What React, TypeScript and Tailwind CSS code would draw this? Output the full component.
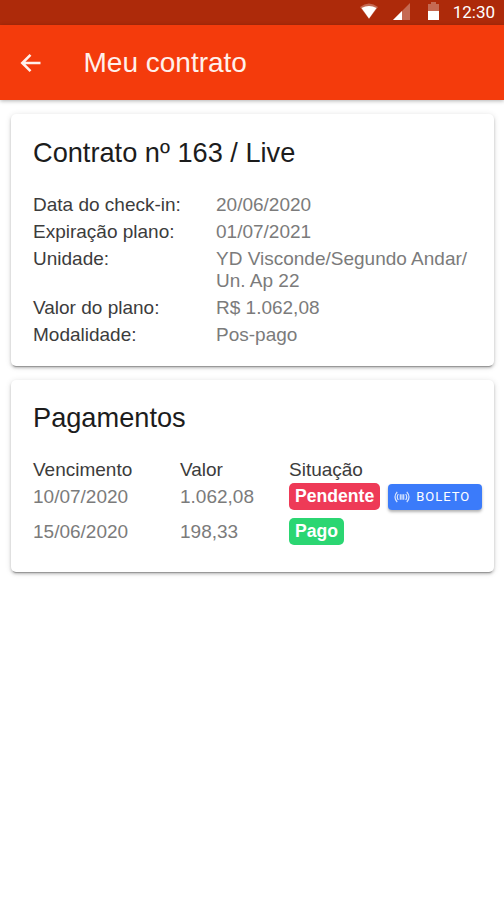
const details = [
  { label: 'Data do check-in:', lines: ['20/06/2020'] },
  { label: 'Expiração plano:', lines: ['01/07/2021'] },
  { label: 'Unidade:', lines: ['YD Visconde/Segundo Andar/', 'Un. Ap 22'] },
  { label: 'Valor do plano:', lines: ['R$ 1.062,08'] },
  { label: 'Modalidade:', lines: ['Pos-pago'] },
];

const payments = [
  { due: '10/07/2020', value: '1.062,08', status: 'Pendente', color: 'bg-[#ee3a57]', open: true },
  { due: '15/06/2020', value: '198,33', status: 'Pago', color: 'bg-[#2bd672]', open: false },
];

const cardClass =
  'rounded-[5px] bg-white px-[22px] shadow-[0_3px_1px_-2px_rgba(0,0,0,0.25),0_2px_3px_0_rgba(0,0,0,0.2),0_1px_6px_0_rgba(0,0,0,0.12)]';

function StatusBar() {
  return (
    <div className="flex h-[25px] items-start justify-end bg-[#ad2a0a] pr-[9px] text-white">
      <svg className="mt-[3px] h-4 w-[18px]" viewBox="0 0 18 16">
        <path d="M0 4Q9-3 18 4L9 16Z" fill="#fff" fillOpacity=".3" />
        <path d="M1.5 5Q9 1 16.5 5L9 15.4Z" fill="#fff" />
      </svg>
      <svg className="mt-[3px] ml-[15px] h-[17px] w-[17px]" viewBox="0 0 17 17">
        <path d="M0 17L17 0V17Z" fill="#fff" fillOpacity=".3" />
        <path d="M0 17L9 8V17Z" fill="#fff" />
      </svg>
      <svg className="mt-[2px] ml-[17px] h-[18px] w-[13px]" viewBox="0 0 13 18">
        <path d="M1 2H4V0H9V2H12V10H1Z" fill="#fff" fillOpacity=".3" />
        <path d="M1 9H12V18H1Z" fill="#fff" />
      </svg>
      <span className="ml-[13px] font-[Roboto,sans-serif] text-[17px] leading-[25px]">12:30</span>
    </div>
  );
}

function Header() {
  return (
    <header className="flex h-[75px] items-center bg-[#f43b0c] pl-5 text-[#fff0eb] shadow-[0_1px_4px_rgba(0,0,0,0.3)]">
      <svg className="h-5 w-[21px]" viewBox="0 0 21 20" fill="none" stroke="currentColor" strokeWidth="2.6">
        <path d="M10.5 1.8L2.3 10L10.5 18.2M2.3 10H20.5" />
      </svg>
      <h1 className="ml-[42.5px] text-[28px] leading-8">Meu contrato</h1>
    </header>
  );
}

function BarcodeIcon() {
  return (
    <svg className="h-[12px] w-[16px] opacity-80" viewBox="0 0 16 12" fill="none" stroke="currentColor" strokeWidth="1.2">
      <path d="M3.2.8Q-1.2 6 3.2 11.2M12.8.8Q17.2 6 12.8 11.2M4.3 3Q2.3 6 4.3 9M11.7 3Q13.7 6 11.7 9" />
      <path d="M6.3 3.2V8.8M8 3.2V8.8M9.7 3.2V8.8" />
    </svg>
  );
}

export default function App() {
  return (
    <div className="min-h-screen bg-white font-['Liberation_Sans',Arial,sans-serif] text-[19px] leading-[22px]">
      <StatusBar />
      <Header />
      <main className="flex flex-col gap-[14px] pt-[14px] pr-[10px] pl-[11px]">
        <section className={`${cardClass} h-[252px] pt-[23px]`}>
          <h2 className="text-[27.2px] leading-8 text-[#1c1c1c]">Contrato nº 163 / Live</h2>
          <dl className="mt-[25px] flex flex-col gap-[5px]">
            {details.map((item) => (
              <div key={item.label} className="flex">
                <dt className="w-[183px] shrink-0 text-[#3c3c3c]">{item.label}</dt>
                <dd className="whitespace-nowrap text-[#7b7b7b]">
                  {item.lines.map((line) => (
                    <div key={line}>{line}</div>
                  ))}
                </dd>
              </div>
            ))}
          </dl>
        </section>

        <section className={`${cardClass} h-[192px] pt-[22px]`}>
          <h2 className="text-[27.2px] leading-8 text-[#1c1c1c]">Pagamentos</h2>
          <div className="mt-[25px] grid grid-cols-[147px_109px_1fr] text-[#3c3c3c]">
            <span>Vencimento</span>
            <span>Valor</span>
            <span>Situação</span>
          </div>
          <div className="mt-[2px] flex flex-col gap-[8px]">
            {payments.map((payment) => (
              <div key={payment.due} className="grid h-[27px] grid-cols-[147px_109px_1fr] items-center text-[#7b7b7b]">
                <span>{payment.due}</span>
                <span>{payment.value}</span>
                <div className="flex items-center">
                  <span className={`${payment.color} h-[27px] rounded-[5px] px-[6px] text-[17.6px] leading-[27px] font-bold text-white`}>
                    {payment.status}
                  </span>
                  {payment.open && (
                    <button className="ml-2 flex h-[26px] w-[94px] items-center rounded-[4px] bg-[#3b7bfa] pl-[6px] text-white shadow-[0_2px_3px_rgba(0,0,0,0.3)]">
                      <BarcodeIcon />
                      <span className="ml-[6px] font-[Roboto,sans-serif] text-[13px] leading-none tracking-[1px]">BOLETO</span>
                    </button>
                  )}
                </div>
              </div>
            ))}
          </div>
        </section>
      </main>
    </div>
  );
}
